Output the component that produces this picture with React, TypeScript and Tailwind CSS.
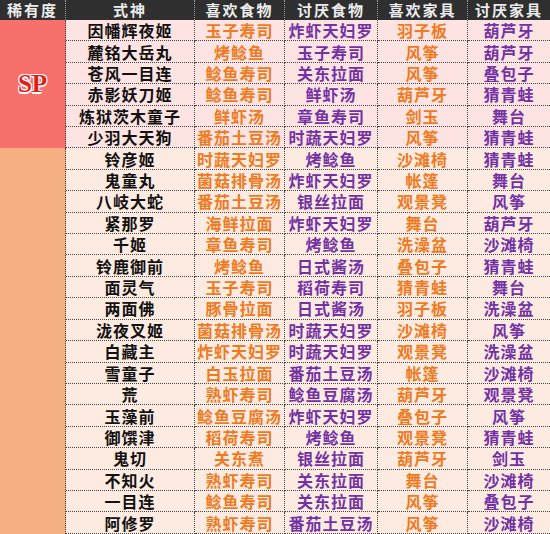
const rows: [string, string, string, string, string][] = [
  ["因幡辉夜姬", "玉子寿司", "炸虾天妇罗", "羽子板", "葫芦牙"],
  ["麓铭大岳丸", "烤鲶鱼", "玉子寿司", "风筝", "葫芦牙"],
  ["苍风一目连", "鲶鱼寿司", "关东拉面", "风筝", "叠包子"],
  ["赤影妖刀姬", "鲶鱼寿司", "鲜虾汤", "葫芦牙", "猜青蛙"],
  ["炼狱茨木童子", "鲜虾汤", "章鱼寿司", "剑玉", "舞台"],
  ["少羽大天狗", "番茄土豆汤", "时蔬天妇罗", "风筝", "猜青蛙"],
  ["铃彦姬", "时蔬天妇罗", "烤鲶鱼", "沙滩椅", "猜青蛙"],
  ["鬼童丸", "菌菇排骨汤", "炸虾天妇罗", "帐篷", "舞台"],
  ["八岐大蛇", "番茄土豆汤", "银丝拉面", "观景凳", "风筝"],
  ["紧那罗", "海鲜拉面", "炸虾天妇罗", "舞台", "葫芦牙"],
  ["千姬", "章鱼寿司", "烤鲶鱼", "洗澡盆", "沙滩椅"],
  ["铃鹿御前", "烤鲶鱼", "日式酱汤", "叠包子", "猜青蛙"],
  ["面灵气", "玉子寿司", "稻荷寿司", "猜青蛙", "舞台"],
  ["两面佛", "豚骨拉面", "日式酱汤", "羽子板", "洗澡盆"],
  ["泷夜叉姬", "菌菇排骨汤", "时蔬天妇罗", "沙滩椅", "风筝"],
  ["白藏主", "炸虾天妇罗", "时蔬天妇罗", "观景凳", "洗澡盆"],
  ["雪童子", "白玉拉面", "番茄土豆汤", "帐篷", "沙滩椅"],
  ["荒", "熟虾寿司", "鲶鱼豆腐汤", "葫芦牙", "观景凳"],
  ["玉藻前", "鲶鱼豆腐汤", "炸虾天妇罗", "叠包子", "风筝"],
  ["御馔津", "稻荷寿司", "烤鲶鱼", "观景凳", "猜青蛙"],
  ["鬼切", "关东煮", "银丝拉面", "葫芦牙", "剑玉"],
  ["不知火", "熟虾寿司", "关东拉面", "舞台", "沙滩椅"],
  ["一目连", "鲶鱼寿司", "关东拉面", "风筝", "叠包子"],
  ["阿修罗", "熟虾寿司", "番茄土豆汤", "风筝", "沙滩椅"],
];

const headers = ["稀有度", "式神", "喜欢食物", "讨厌食物", "喜欢家具", "讨厌家具"];

// colour per data column: name, likes, dislikes, likes, dislikes
const textColors = [
  "text-[#111111]",
  "text-[#ee7a22]",
  "text-[#7232a4]",
  "text-[#ee7a22]",
  "text-[#7232a4]",
];

export default function App() {
  return (
    <div
      className="w-[550px] h-[534px] overflow-hidden bg-[#fdece2]"
      style={{ fontFamily: '"Noto Sans CJK SC", "Noto Sans", sans-serif' }}
    >
      <div className="grid grid-cols-[66px_129px_90px_93px_90px_82px] grid-rows-[20px_repeat(24,21.42px)]">
        {headers.map((h, i) => (
          <div
            key={h}
            className={`flex items-center justify-center bg-[#2f2f2f] text-[15px] font-bold tracking-[2px] text-[#ececec] ${
              i < 5 ? "border-r border-dotted border-[#9a9a9a]" : ""
            }`}
          >
            {h}
          </div>
        ))}

        <div className="row-span-6 flex items-center justify-center bg-[#f8706c] border-r border-dotted border-[#444]">
          <span
            className="text-[25px] font-bold text-[#e11f1a] [text-shadow:1px_1px_0_#fff,-1px_-1px_0_#fff,1px_-1px_0_#fff,-1px_1px_0_#fff,0_2px_0_#fff]"
            style={{ fontFamily: '"Liberation Serif", serif' }}
          >
            SP
          </span>
        </div>
        {rows.slice(0, 6).map((r, ri) => (
          <Row key={ri} cells={r} bg="bg-[#fde3e1]" />
        ))}

        <div className="row-span-18 bg-[#f4b083] border-r border-dotted border-[#444]" />
        {rows.slice(6).map((r, ri) => (
          <Row key={ri + 6} cells={r} bg="bg-[#fdebe1]" />
        ))}
      </div>
    </div>
  );
}

function Row({ cells, bg }: { cells: string[]; bg: string }) {
  return (
    <>
      {cells.map((c, i) => (
        <div
          key={i}
          className={`flex items-center justify-center ${bg} border-b border-dotted border-[#444] text-[16px] font-bold leading-none tracking-[1px] whitespace-nowrap ${
            textColors[i]
          } ${i < 4 ? "border-r" : ""}`}
        >
          {c}
        </div>
      ))}
    </>
  );
}
